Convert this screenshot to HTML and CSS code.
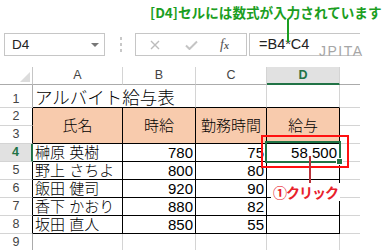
FILE: index.html
```html
<!DOCTYPE html>
<html lang="ja">
<head>
<meta charset="utf-8">
<title>給与表</title>
<link rel="stylesheet" href="styles.css">
</head>
<body>
<div class="app">
  <div class="toolbar">
    <div class="namebox"><span>D4</span><span class="caret"></span></div>
    <div class="grip"><i></i><i></i><i></i></div>
    <div class="fxbox">
      <svg class="ico-x" width="10" height="10" viewBox="0 0 10 10"><path d="M1 1L9 9M9 1L1 9" stroke="#bcbcbc" stroke-width="1.4" fill="none"/></svg>
      <svg class="ico-ok" width="13" height="10" viewBox="0 0 13 10"><path d="M1 5.5L4.5 9L12 1.5" stroke="#c4c4c4" stroke-width="2" fill="none"/></svg>
      <span class="fx"><i>f</i><span>x</span></span>
    </div>
    <div class="formula">=B4*C4</div>
  </div>

  <div class="sheet">
    <div class="c corner"><span class="tri"></span></div>
    <div class="c ch">A</div>
    <div class="c ch">B</div>
    <div class="c ch">C</div>
    <div class="c ch sel-col">D</div>
    <div class="c ch e"></div>

    <div class="c rh r1">1</div>
    <div class="c title">アルバイト給与表</div>
    <div class="c tb"></div>
    <div class="c tb"></div>
    <div class="c e"></div>

    <div class="c rh tl">2</div>
    <div class="c t hd">氏名</div>
    <div class="c t hd">時給</div>
    <div class="c t hd">勤務時間</div>
    <div class="c t hd">給与</div>
    <div class="c e"></div>

    <div class="c rh tl">3</div>
    <div class="c e"></div>

    <div class="c rh tl sel-row">4</div>
    <div class="c t nm">榊原 英樹</div>
    <div class="c t num">780</div>
    <div class="c t num">75</div>
    <div class="c t num">58,500</div>
    <div class="c e"></div>

    <div class="c rh tl">5</div>
    <div class="c t nm">野上 さちよ</div>
    <div class="c t num">800</div>
    <div class="c t num">80</div>
    <div class="c t num"></div>
    <div class="c e"></div>

    <div class="c rh tl">6</div>
    <div class="c t nm">飯田 健司</div>
    <div class="c t num">920</div>
    <div class="c t num">90</div>
    <div class="c t num"></div>
    <div class="c e"></div>

    <div class="c rh tl">7</div>
    <div class="c t nm">香下 かおり</div>
    <div class="c t num">880</div>
    <div class="c t num">82</div>
    <div class="c t num"></div>
    <div class="c e"></div>

    <div class="c rh tl">8</div>
    <div class="c t nm">坂田 直人</div>
    <div class="c t num">850</div>
    <div class="c t num">55</div>
    <div class="c t num"></div>
    <div class="c e"></div>

    <div class="c rh">9</div>
    <div class="c"></div>
    <div class="c"></div>
    <div class="c"></div>
    <div class="c"></div>
    <div class="c e"></div>
  </div>

  <div class="note">[D4]セルには数式が入力されています</div>
  <div class="note-line"></div>
  <div class="jpita">JPITA</div>
  <div class="sel"></div>
  <div class="handle"></div>
  <div class="redbox"></div>
  <div class="redline"></div>
  <div class="callout">①クリック</div>
</div>
</body>
</html>
```

FILE: styles.css
```css
* { box-sizing: border-box; }
html, body { margin: 0; padding: 0; background: #fff; }
body {
  width: 388px;
  height: 250px;
  overflow: hidden;
  font-family: "Liberation Sans", "Noto Sans CJK JP", sans-serif;
  color: #000;
}
.app { position: relative; width: 388px; height: 250px; }

/* toolbar */
.toolbar {
  height: 67px;
  padding: 33px 0 0 4px;
  display: flex;
  align-items: flex-start;
}
.namebox {
  width: 101px;
  height: 23px;
  border: 1px solid #c6c6c6;
  display: flex;
  align-items: center;
  justify-content: space-between;
  padding: 0 5px 0 7px;
  font-size: 13.5px;
  color: #222;
}
.caret {
  width: 0; height: 0;
  border-left: 4px solid transparent;
  border-right: 4px solid transparent;
  border-top: 4px solid #777;
}
.grip {
  margin-left: 15px;
  height: 23px;
  display: flex;
  flex-direction: column;
  justify-content: center;
  gap: 3px;
}
.grip i { display: block; width: 2px; height: 3px; background: #c8c8c8; }
.fxbox {
  margin-left: 13px;
  width: 112px;
  height: 23px;
  border: 1px solid #c6c6c6;
  display: flex;
  align-items: center;
  padding-left: 14px;
}
.ico-ok { margin-left: 25px; }
.fx { margin-left: 22px; font-family: "Liberation Serif", serif; color: #555; font-size: 14px; }
.fx i { font-style: italic; }
.fx span { font-style: italic; font-size: 10px; font-weight: bold; }
.formula {
  margin-left: 2px;
  width: 111px;
  height: 23px;
  border: 1px solid #c6c6c6;
  border-right: none;
  padding-left: 9px;
  font-size: 14.5px;
  line-height: 21px;
  color: #222;
}

/* sheet */
.sheet {
  display: grid;
  width: 360px;
  grid-template-columns: 33px 90px 73px 71px 73px 20px;
  grid-template-rows: 18px 23px repeat(8, 18px);
}
.c {
  border-right: 1px solid #d4d4d4;
  border-bottom: 1px solid #d4d4d4;
  font-size: 15px;
  font-weight: 300;
  line-height: 17px;
  white-space: nowrap;
  overflow: hidden;
}
.e { border-right: none; }
.corner {
  border-right-color: #c6c6c6;
  border-bottom-color: #ababab;
  display: flex;
  justify-content: flex-end;
  align-items: flex-end;
  padding: 0 2px 2px 0;
}
.tri {
  width: 0; height: 0;
  border-left: 10px solid transparent;
  border-bottom: 10px solid #dcdcdc;
}
.ch {
  border-bottom-color: #ababab;
  text-align: center;
  font-size: 12.5px;
  font-weight: 400;
  color: #444;
  display: flex;
  align-items: center;
  justify-content: center;
}
.ch.e { border-right: none; }
.sel-col {
  background: #e1e1e1;
  color: #217346;
  font-weight: bold;
  border-bottom: 2px solid #217346;
}
.rh {
  border-right-color: #ababab;
  font-size: 12.5px;
  font-weight: 400;
  color: #444;
  display: flex;
  align-items: center;
  justify-content: center;
}
.rh.r1 { align-items: flex-end; line-height: 15px; }
.rh.tl { border-right-color: #000; }
.sel-row {
  background: #e1e1e1;
  color: #217346;
  font-weight: bold;
  border-right: 2px solid #217346 !important;
}
.title {
  grid-column: span 2;
  border-bottom-color: #000;
  font-size: 17.5px;
  line-height: 18px;
  padding-left: 2px;
  display: flex;
  align-items: flex-end;
}
.tb { border-bottom-color: #000; }
.t { border-right-color: #000; border-bottom-color: #000; }
.hd {
  grid-row: span 2;
  background: #f8cbad;
  display: flex;
  align-items: center;
  justify-content: center;
}
.nm { padding-left: 2px; }
.num { text-align: right; padding-right: 2px; }

/* overlays */
.note {
  position: absolute;
  left: 150px;
  top: 3px;
  font-family: "Noto Sans CJK JP", sans-serif;
  font-weight: bold;
  font-size: 13.6px;
  line-height: 18px;
  color: #1b9e22;
  white-space: nowrap;
}
.note-line {
  position: absolute;
  left: 287px;
  top: 19px;
  width: 2px;
  height: 23px;
  background: #1b9e22;
}
.jpita {
  position: absolute;
  left: 319px;
  top: 44px;
  font-size: 14px;
  letter-spacing: 1.5px;
  color: #a6a6a6;
  line-height: 14px;
}
.sel {
  position: absolute;
  left: 265px;
  top: 141px;
  width: 76px;
  height: 22px;
  border: 2px solid #217346;
}
.handle {
  position: absolute;
  left: 336px;
  top: 158px;
  width: 7px;
  height: 7px;
  background: #217346;
  border: 1px solid #fff;
}
.redbox {
  position: absolute;
  left: 261px;
  top: 135px;
  width: 88px;
  height: 33px;
  border: 2px solid #ff1010;
}
.redline {
  position: absolute;
  left: 309px;
  top: 156px;
  width: 2px;
  height: 28px;
  background: #b8323a;
}
.callout {
  position: absolute;
  left: 271px;
  top: 183px;
  padding: 0 2px;
  background: #fff;
  font-family: "Noto Sans CJK JP", sans-serif;
  font-weight: bold;
  font-size: 14px;
  letter-spacing: -1px;
  line-height: 18px;
  color: #e8202a;
  white-space: nowrap;
}
```
